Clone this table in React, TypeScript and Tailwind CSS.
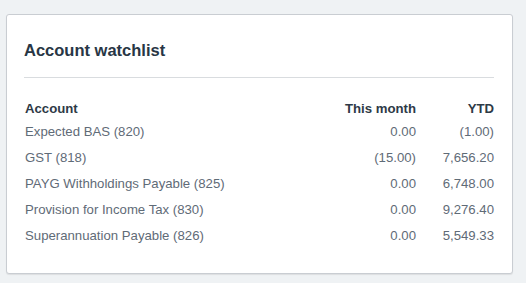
const rows = [
  { name: 'Expected BAS (820)', month: '0.00', ytd: '(1.00)' },
  { name: 'GST (818)', month: '(15.00)', ytd: '7,656.20' },
  { name: 'PAYG Withholdings Payable (825)', month: '0.00', ytd: '6,748.00' },
  { name: 'Provision for Income Tax (830)', month: '0.00', ytd: '9,276.40' },
  { name: 'Superannuation Payable (826)', month: '0.00', ytd: '5,549.33' },
];

export default function App() {
  return (
    <div className="w-[526px] h-[283px] bg-[#eff2f4] pt-[14px] pl-[6px] font-['Liberation_Sans',Arial,sans-serif]">
      <div className="w-[507px] h-[260px] bg-white border border-[#c9cdd2] rounded-[3px] shadow-[0_1px_1px_rgba(0,0,0,0.08)] pl-[17px] pr-[18px]">
        <h2 className="pt-[25px] pb-[17px] text-[16.5px] leading-[20px] font-bold text-[#283645] border-b border-[#d9dcdf]">
          Account watchlist
        </h2>
        <table className="w-full mt-[21px] text-[13.2px] text-[#5f6b77]">
          <thead>
            <tr className="h-[19px] text-[#2e3a47]">
              <th className="text-left font-bold pl-[1px]">Account</th>
              <th className="text-right font-bold">This month</th>
              <th className="text-right font-bold w-[78px]">YTD</th>
            </tr>
          </thead>
          <tbody>
            {rows.map((r) => (
              <tr key={r.name} className="h-[26px]">
                <td className="pl-[1px]">{r.name}</td>
                <td className="text-right">{r.month}</td>
                <td className="text-right">{r.ytd}</td>
              </tr>
            ))}
          </tbody>
        </table>
      </div>
    </div>
  );
}
